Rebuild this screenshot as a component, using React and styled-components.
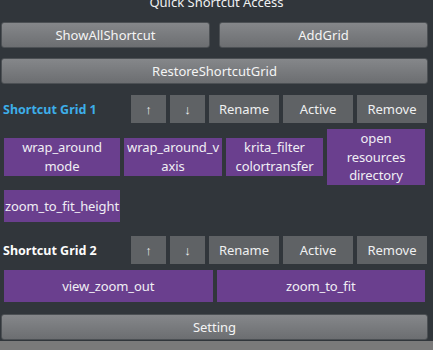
import React from 'react';
import styled, { createGlobalStyle } from 'styled-components';

const GlobalStyle = createGlobalStyle`
    body{
        margin: 0;
        background: #31363b;
        font-family: "Noto Sans", "Open Sans", sans-serif;
        color: #eff0f1;
    }
`

const grids = [
    {
        name: 'Shortcut Grid 1',
        active: true,
        columns: '116px 98px 97px 98px',
        items: ['wrap_around\nmode', 'wrap_around_v\naxis', 'krita_filter\ncolortransfer', 'open\nresources\ndirectory', 'zoom_to_fit_height'],
    },
    {
        name: 'Shortcut Grid 2',
        active: false,
        columns: '1fr 1fr',
        items: ['view_zoom_out', 'zoom_to_fit'],
    },
]

const App = () => {
    return (
        <>
            <GlobalStyle />
            <Page>
                <Title>Quick Shortcut Access</Title>
                <Main>
                    <TopRow>
                        <PanelButton>ShowAllShortcut</PanelButton>
                        <PanelButton>AddGrid</PanelButton>
                    </TopRow>
                    <PanelButton $gap={10}>RestoreShortcutGrid</PanelButton>
                    {grids.map((grid) => (
                        <Section key={grid.name}>
                            <Header>
                                <Label $active={grid.active}>{grid.name}</Label>
                                <Tools>
                                    <ToolButton $w={35}>↑</ToolButton>
                                    <ToolButton $w={35}>↓</ToolButton>
                                    <ToolButton $w={70}>Rename</ToolButton>
                                    <ToolButton $w={70}>Active</ToolButton>
                                    <ToolButton $w={70}>Remove</ToolButton>
                                </Tools>
                            </Header>
                            <Cells $columns={grid.columns}>
                                {grid.items.map((item) => (
                                    <Cell key={item}>{item}</Cell>
                                ))}
                            </Cells>
                        </Section>
                    ))}
                    <PanelButton $gap={9}>Setting</PanelButton>
                </Main>
                <Footer />
            </Page>
        </>
    )
}

const Page = styled.div`
    width: 433px;
    height: 350px;
    overflow: hidden;
    display: flex;
    flex-direction: column;
`
const Title = styled.div`
    margin-top: -6px;
    height: 17px;
    line-height: 17px;
    text-align: center;
    font-size: 13px;
    color: #eff0f1;
`
const Main = styled.div`
    padding: 11px 5px 0 1px;
    display: flex;
    flex-direction: column;
`
const TopRow = styled.div`
    display: grid;
    grid-template-columns: 1fr 1fr;
    gap: 9px;
`
const PanelButton = styled.div`
    margin-top: ${(p) => p.$gap || 0}px;
    height: 26px;
    box-sizing: border-box;
    border: 1px solid #4c5054;
    border-radius: 3px;
    background: linear-gradient(#85878a, #6c6e71);
    display: flex;
    align-items: center;
    justify-content: center;
    font-size: 13px;
    color: #f4f4f4;
`
const Section = styled.div`
    margin-top: 11px;
`
const Header = styled.div`
    display: flex;
    align-items: center;
    justify-content: space-between;
    height: 28px;
    padding-left: 2px;
    padding-right: 1px;
`
const Label = styled.div`
    font-weight: bold;
    font-size: 12.5px;
    color: ${(p) => (p.$active ? '#3daee9' : '#fcfcfc')};
`
const Tools = styled.div`
    display: flex;
    gap: 4px;
    height: 100%;
`
const ToolButton = styled.div`
    width: ${(p) => p.$w}px;
    background: #5f6265;
    display: flex;
    align-items: center;
    justify-content: center;
    font-size: 13px;
    color: #eff0f1;
`
const Cells = styled.div`
    display: grid;
    grid-template-columns: ${(p) => p.$columns};
    column-gap: 4px;
    row-gap: 5px;
    align-items: center;
    margin-top: 6px;
    padding: 0 3px 3px 3px;
`
const Cell = styled.div`
    background: #6a3f8e;
    min-height: 32px;
    display: flex;
    align-items: center;
    justify-content: center;
    text-align: center;
    white-space: pre-line;
    line-height: 18.7px;
    font-size: 13px;
    letter-spacing: -0.1px;
    color: #f0eef4;
`
const Footer = styled.div`
    margin-top: auto;
    height: 9px;
    background: #7a7a7a;
`

export default App
